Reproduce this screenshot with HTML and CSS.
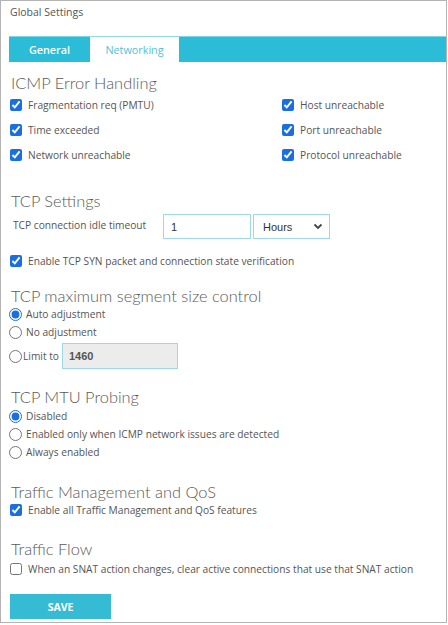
FILE: index.html
```html
<!DOCTYPE html>
<html>
<head>
<meta charset="utf-8">
<link rel="stylesheet" href="styles.css">
</head>
<body>
<div class="panel">
  <div class="title">Global Settings</div>
  <div class="tabs">
    <div class="tab tab-general">General</div>
    <div class="tab tab-active">Networking</div>
  </div>

  <h2 class="h h-icmp">ICMP Error Handling</h2>
  <div class="grid">
    <label class="row"><input type="checkbox" checked><span>Fragmentation req (PMTU)</span></label>
    <label class="row"><input type="checkbox" checked><span>Host unreachable</span></label>
    <label class="row"><input type="checkbox" checked><span>Time exceeded</span></label>
    <label class="row"><input type="checkbox" checked><span>Port unreachable</span></label>
    <label class="row"><input type="checkbox" checked><span>Network unreachable</span></label>
    <label class="row"><input type="checkbox" checked><span>Protocol unreachable</span></label>
  </div>

  <h2 class="h h-tcp">TCP Settings</h2>
  <div class="timeout">
    <span class="tlabel">TCP connection idle timeout</span>
    <div class="field field-num">1</div>
    <div class="field field-select"><span>Hours</span>
      <svg width="10" height="7" viewBox="0 0 10 7"><path d="M1.5 1.5 L5 5 L8.5 1.5" fill="none" stroke="#444" stroke-width="1.8"/></svg>
    </div>
  </div>
  <label class="row row-syn"><input type="checkbox" checked><span>Enable TCP SYN packet and connection state verification</span></label>

  <h2 class="h h-mss">TCP maximum segment size control</h2>
  <label class="rrow"><input type="radio" name="mss" checked><span>Auto adjustment</span></label>
  <label class="rrow"><input type="radio" name="mss"><span>No adjustment</span></label>
  <label class="rrow rrow-limit"><input type="radio" name="mss"><span class="limit-label">Limit to</span><div class="field field-limit">1460</div></label>

  <h2 class="h h-mtu">TCP MTU Probing</h2>
  <div class="mtu">
    <label class="rrow"><input type="radio" name="mtu" checked><span>Disabled</span></label>
    <label class="rrow"><input type="radio" name="mtu"><span>Enabled only when ICMP network issues are detected</span></label>
    <label class="rrow"><input type="radio" name="mtu"><span>Always enabled</span></label>
  </div>

  <h2 class="h h-qos">Traffic Management and QoS</h2>
  <label class="row row-single"><input type="checkbox" checked><span>Enable all Traffic Management and QoS features</span></label>

  <h2 class="h h-flow">Traffic Flow</h2>
  <label class="row row-single row-snat"><input type="checkbox"><span>When an SNAT action changes, clear active connections that use that SNAT action</span></label>

  <button class="save">SAVE</button>
</div>
</body>
</html>
```

FILE: styles.css
```css
* { box-sizing: border-box; }
html, body { margin: 0; padding: 0; background: #fff; }
body {
  font-family: "Open Sans", "Liberation Sans", sans-serif;
  font-size: 10.2px;
  color: #555;
}
.panel {
  width: 447px;
  height: 623px;
  border: 1px solid #b4b4b4;
  padding: 0 0 0 8px;
  overflow: hidden;
}
.title {
  font-size: 10.5px;
  line-height: 14px;
  padding-top: 4px;
  padding-left: 1px;
  color: #555;
}
.tabs {
  margin-top: 17px;
  height: 26px;
  background: #2bbdd7;
  border-top: 1px solid #7fd6e6;
  display: flex;
}
.tab {
  height: 25px;
  display: flex;
  align-items: center;
  justify-content: center;
  font-size: 10.8px;
}
.tab-general {
  width: 81px;
  color: #fff;
  font-weight: 600;
}
.tab-active {
  width: 89px;
  background: #fff;
  color: #4fc3da;
  height: 26px;
  margin-top: -1px;
  border-top: 1px solid #8fd9e8;
}
.h {
  margin: 0;
  font-family: "Lato", "Open Sans", sans-serif;
  font-weight: 300;
  font-size: 16.4px;
  line-height: 19px;
  height: 19px;
  color: #5a5a5a;
  padding-left: 2px;
}
.h-icmp { margin-top: 11px; }
.h-tcp { margin-top: 24px; }
.h-mss { margin-top: 13px; }
.h-mtu { margin-top: 18px; }
.h-qos { margin-top: 21px; }
.h-flow { margin-top: 20px; }

.grid {
  display: grid;
  grid-template-columns: 272px 1fr;
}
.row {
  display: flex;
  align-items: center;
  height: 25px;
  padding-left: 1px;
}
.row input[type=checkbox] {
  width: 12px;
  height: 12px;
  margin: 0 6px 0 0;
  accent-color: #1a6fe0;
}
.timeout {
  display: flex;
  align-items: center;
  height: 25px;
  margin-top: 4px;
  padding-left: 4px;
}
.tlabel {
  width: 150px;
  margin-top: -3px;
}
.field {
  height: 25px;
  border: 1px solid #9bdae6;
  display: flex;
  align-items: center;
  font-family: "Liberation Sans", Arial, sans-serif;
  font-size: 11px;
  color: #333;
}
.field-num {
  width: 88px;
  padding-left: 7px;
}
.field-select {
  width: 77px;
  margin-left: 2px;
  padding: 0 6px 0 9px;
  justify-content: space-between;
}
.row-syn { margin-top: 10px; height: 24px; }

.rrow {
  display: flex;
  align-items: center;
  height: 18px;
  padding-left: 0;
}
.rrow input[type=radio] {
  width: 13px;
  height: 13px;
  margin: 0 4px 0 0;
  accent-color: #1a6fe0;
}
.rrow-limit {
  height: 26px;
  margin-top: 2px;
}
.rrow-limit input[type=radio] { margin-right: 1px; }
.limit-label { margin-right: 3px; }
.field-limit {
  width: 116px;
  height: 26px;
  background: #ececec;
  padding-left: 6px;
  font-weight: bold;
  color: #555;
}
.mtu { margin-top: 1px; }
.row-single { height: 18px; }
.row-snat { margin-top: 2px; }

.save {
  display: block;
  margin-top: 16px;
  margin-left: 1px;
  width: 101px;
  height: 25px;
  border: 0;
  background: #35bcd4;
  color: #fff;
  font-family: "Open Sans", sans-serif;
  font-weight: 700;
  font-size: 10.5px;
  padding: 0;
}
```
